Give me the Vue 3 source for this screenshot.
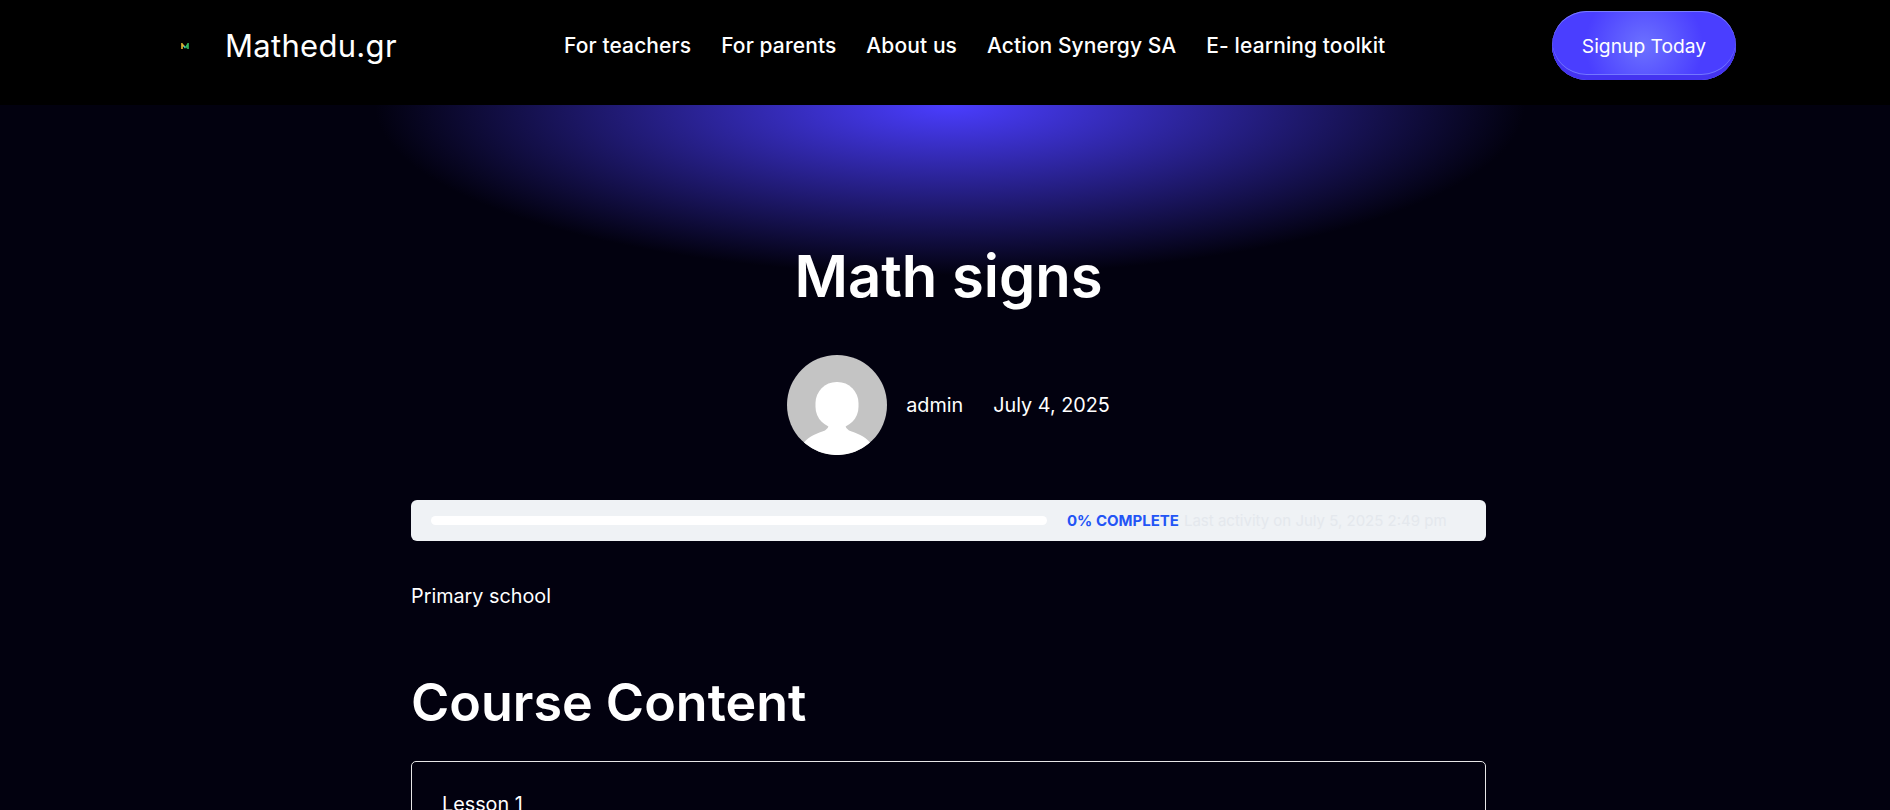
<template>
  <div class="page">
    <header class="top">
      <a class="brand" href="#">
        <svg class="brand-icon" viewBox="0 0 8 6" width="8" height="6">
          <path d="M1 6V1L3 3.5" stroke="#d8b030" fill="none" stroke-width="1.7" />
          <path d="M3 3L4.5 5" stroke="#45c4c8" fill="none" stroke-width="1.7" />
          <path d="M4.5 5L7 1V6" stroke="#2fb35a" fill="none" stroke-width="1.7" />
        </svg>
        <span class="brand-name">Mathedu.gr</span>
      </a>
      <nav class="nav">
        <a v-for="link in links" :key="link" href="#">{{ link }}</a>
      </nav>
      <button class="signup">Signup Today</button>
    </header>

    <main class="main">
      <h1 class="title">Math signs</h1>
      <div class="meta">
        <svg class="avatar" viewBox="0 0 100 100" width="100" height="100">
          <circle cx="50" cy="50" r="50" fill="#c4c4c4" />
          <rect x="28.5" y="27" width="43" height="46" rx="21" fill="#fff" />
          <path d="M17 87.6C22 81 31 78 38 75.5Q41 74 42 70L58 70Q59 74 62 75.5C69 78 78 81 83 87.6A50 50 0 0 1 17 87.6Z" fill="#fff" />
        </svg>
        <span class="author">admin</span>
        <span>July 4, 2025</span>
      </div>

      <div class="content">
        <div class="progress">
          <div class="track"></div>
          <span class="percent">0% COMPLETE</span>
          <span class="activity">Last activity on July 5, 2025 2:49 pm</span>
        </div>
        <p class="level">Primary school</p>
        <h2 class="heading">Course Content</h2>
        <div class="lessons">
          <div class="lesson">Lesson 1</div>
        </div>
      </div>
    </main>
  </div>
</template>

<script setup>
const links = ['For teachers', 'For parents', 'About us', 'Action Synergy SA', 'E- learning toolkit']
</script>

<style>
html,
body {
  margin: 0;
  height: 810px;
  overflow: hidden;
  background: #02010f;
}
</style>

<style scoped>
.page {
  font-family: Inter, 'Liberation Sans', sans-serif;
  color: #fff;
  font-size: 19.8px;
}
a {
  color: inherit;
  text-decoration: none;
}
.top {
  height: 105px;
  box-sizing: border-box;
  background: #000;
  display: flex;
  align-items: center;
  padding: 0 154px 14px 181px;
}
.brand {
  display: flex;
  align-items: center;
  gap: 36px;
  width: 383px;
}
.brand-name {
  font-size: 31px;
  letter-spacing: 0.3px;
}
.nav {
  display: flex;
  gap: 30px;
  font-size: 21px;
  font-weight: 500;
  letter-spacing: 0.1px;
}
.signup {
  margin-left: auto;
  width: 184px;
  height: 69px;
  border: 0;
  border-radius: 35px;
  color: #fff;
  font: 400 19.25px Inter, sans-serif;
  background: radial-gradient(circle at 50% 50%, #6c71ff 0%, #4a3eff 60%);
  box-shadow: inset 0 1px 0 #7a7cff, inset 0 -5px 0 #4433f0, inset 0 -6px 0 #7377ff;
}
.main {
  background: radial-gradient(575px 170px at 950px 0, #4a3dff 0%, #02010f 100%) no-repeat;
  padding: 135px 0 0 7px;
}
.title {
  margin: 0;
  text-align: center;
  font-size: 58px;
  line-height: 72px;
  font-weight: 600;
}
.meta {
  display: flex;
  justify-content: center;
  align-items: center;
  gap: 30px;
  margin-top: 43px;
}
.avatar {
  margin-right: -11px;
}
.content {
  width: 1075px;
  margin: 45px auto 0;
}
.progress {
  display: flex;
  align-items: center;
  height: 41px;
  padding: 0 20px;
  background: #eff2f5;
  border-radius: 6px;
  font-size: 15px;
}
.track {
  width: 616px;
  height: 9px;
  background: #fff;
  border-radius: 5px;
  margin-right: 20px;
}
.percent {
  color: #2355f5;
  font-weight: 700;
  margin-right: 5px;
}
.activity {
  color: #e4e8ed;
}
.level {
  margin: 43px 0 0;
}
.heading {
  margin: 61px 0 0;
  font-size: 52px;
  line-height: 68px;
  font-weight: 600;
}
.lessons {
  margin-top: 24px;
  border: 1px solid #e6e6e6;
  border-radius: 5px;
  padding: 30px;
  height: 200px;
}
</style>
